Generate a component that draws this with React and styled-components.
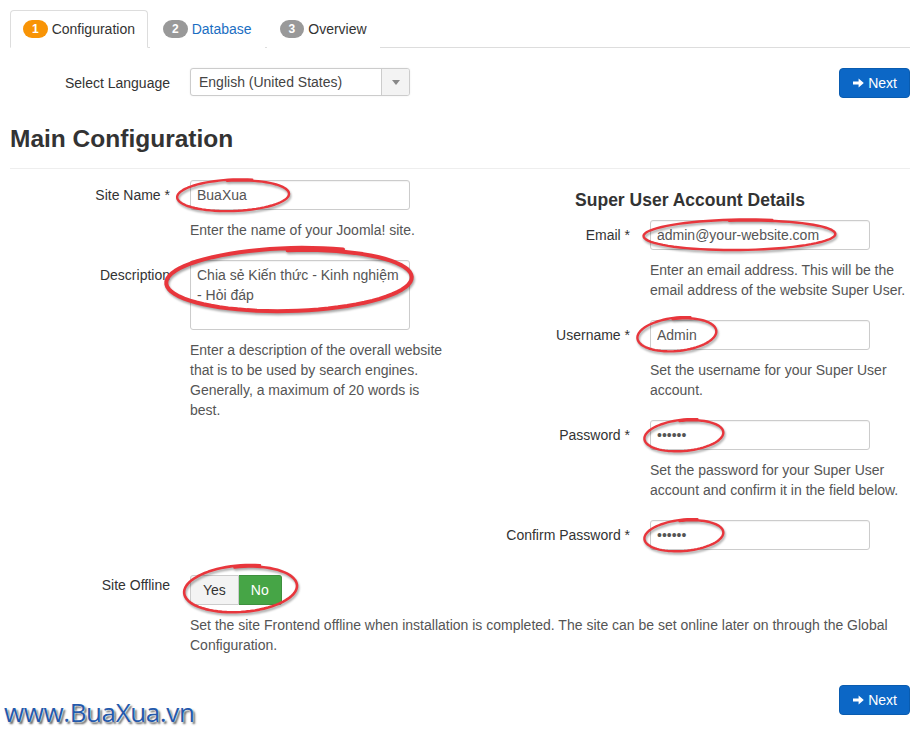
import React from "react";
import styled, { createGlobalStyle } from "styled-components";

const GlobalStyle = createGlobalStyle`
  html, body { margin: 0; padding: 0; background: #fff; }
  body {
    font-family: "Liberation Sans", Arial, sans-serif;
    font-size: 14px;
    line-height: 20px;
    color: #333;
  }
  * { box-sizing: border-box; }
`;

const Page = styled.div`
  position: relative;
  width: 923px;
  min-height: 729px;
  padding: 10px 13px 0 10px;
  overflow: hidden;
`;

const Tabs = styled.ul`
  display: flex;
  list-style: none;
  margin: 0;
  padding: 0;
  border-bottom: 1px solid #ddd;
`;

const Tab = styled.li`
  display: flex;
  align-items: center;
  gap: 4px;
  margin: 0 2px -1px 0;
  padding: 8px 12px;
  line-height: 20px;
  border: 1px solid ${(p) => (p.$active ? "#ddd" : "transparent")};
  border-bottom-color: ${(p) => (p.$active ? "#fff" : "transparent")};
  border-radius: 4px 4px 0 0;
  background: #fff;
`;

const Badge = styled.span`
  display: inline-block;
  min-width: 24px;
  padding: 2px 9px;
  font-size: 12px;
  font-weight: bold;
  line-height: 14px;
  color: #fff;
  text-align: center;
  border-radius: 9px;
  background: ${(p) => p.$color};
`;

const TabText = styled.span`
  color: ${(p) => (p.$link ? "#1b6ec2" : "#333")};
`;

const TopRow = styled.div`
  display: flex;
  align-items: flex-start;
  justify-content: space-between;
  margin-top: 20px;
`;

const FieldRow = styled.div`
  display: flex;
  align-items: flex-start;
  margin-bottom: ${(p) => (p.$mb != null ? p.$mb : 20)}px;
  margin-top: ${(p) => p.$mt || 0}px;
`;

const Label = styled.label`
  flex: 0 0 160px;
  width: 160px;
  text-align: right;
  padding-top: ${(p) => (p.$pt != null ? p.$pt : 5)}px;
  line-height: 20px;
  color: #333;
`;

const Controls = styled.div`
  position: relative;
  margin-left: 20px;
  flex: 1;
`;

const Input = styled.input`
  display: block;
  width: 220px;
  height: 30px;
  padding: 4px 6px;
  margin: 0;
  font-family: "Liberation Sans", Arial, sans-serif;
  font-size: 14px;
  line-height: 20px;
  color: #555;
  background: #fff;
  border: 1px solid #ccc;
  border-radius: 3px;
  box-shadow: inset 0 1px 1px rgba(0, 0, 0, 0.05);
  outline: none;
`;

const TextArea = styled.textarea`
  display: block;
  width: 220px;
  height: 70px;
  padding: 4px 6px;
  margin: 0;
  resize: none;
  font-family: "Liberation Sans", Arial, sans-serif;
  font-size: 14px;
  line-height: 20px;
  color: #555;
  background: #fff;
  border: 1px solid #ccc;
  border-radius: 3px;
  box-shadow: inset 0 1px 1px rgba(0, 0, 0, 0.05);
  outline: none;
  overflow: hidden;
`;

const Select = styled.div`
  display: flex;
  width: 220px;
  height: 28px;
  border: 1px solid #ccc;
  border-radius: 3px;
  background: #fff;
  box-shadow: 0 0 2px rgba(0, 0, 0, 0.08);
  overflow: hidden;
`;

const SelectValue = styled.div`
  flex: 1;
  padding: 3px 8px;
  line-height: 20px;
  color: #444;
`;

const SelectArrow = styled.div`
  flex: 0 0 28px;
  display: flex;
  align-items: center;
  justify-content: center;
  border-left: 1px solid #ccc;
  background: #f3f3f3;
  &::after {
    content: "";
    border-left: 4px solid transparent;
    border-right: 4px solid transparent;
    border-top: 5px solid #888;
  }
`;

const PrimaryButton = styled.button`
  display: inline-flex;
  align-items: center;
  gap: 4px;
  height: 30px;
  padding: 4px 12px 4px 13px;
  font-family: "Liberation Sans", Arial, sans-serif;
  font-size: 14px;
  line-height: 20px;
  color: #fff;
  background: #0c67c6;
  border: 1px solid #0a5cb0;
  border-radius: 4px;
  cursor: pointer;
`;

const PageHeader = styled.h3`
  margin: 21px 0 11px;
  padding-bottom: 9px;
  border-bottom: 1px solid #eee;
  font-size: 24.5px;
  font-weight: bold;
  line-height: 40px;
  color: #333;
`;

const Columns = styled.div`
  display: grid;
  grid-template-columns: 438px 1fr;
  column-gap: 22px;
`;

const Column = styled.div``;

const SubHeading = styled.h4`
  margin: 10px 0;
  font-size: 17.5px;
  font-weight: bold;
  line-height: 20px;
  text-align: center;
  color: #333;
`;

const Help = styled.div`
  margin-top: 10px;
  color: #555;
  line-height: 20px;
`;

const ToggleGroup = styled.div`
  display: inline-flex;
`;

const ToggleBtn = styled.span`
  display: inline-block;
  height: 30px;
  padding: 4px 12px;
  line-height: 20px;
  font-size: 14px;
  color: ${(p) => (p.$on ? "#fff" : "#333")};
  background: ${(p) => (p.$on ? "#46a546" : "#f3f3f3")};
  border: 1px solid ${(p) => (p.$on ? "#3e8f3e" : "#ccc")};
  &:first-child { border-radius: 3px 0 0 3px; }
  &:last-child { border-radius: 0 3px 3px 0; border-left: 0; }
`;

const Footer = styled.div`
  display: flex;
  justify-content: flex-end;
  margin-top: 30px;
`;

const Watermark = styled.div`
  position: absolute;
  left: 4px;
  bottom: 0px;
  font-family: "Open Sans", "Noto Sans", sans-serif;
  font-size: 26px;
  line-height: 34px;
  color: #2459ab;
  letter-spacing: -0.4px;
  text-shadow: 0 0 1px #fff, 0 0 2px #fff, 2px 2px 2px rgba(50, 50, 50, 0.8);
`;

const Mark = styled.svg.attrs((p) => ({
  width: p.$w,
  height: p.$h,
  viewBox: `0 0 ${p.$w} ${p.$h}`,
}))`
  position: absolute;
  left: ${(p) => p.$x}px;
  top: ${(p) => p.$y}px;
  overflow: visible;
  pointer-events: none;
  z-index: 2;
  filter: drop-shadow(1px 2px 1.2px rgba(0, 0, 0, 0.35));
`;

function loopPath(w, h, tilt = -0.03, start = -1.7, extra = 0.45, grow = 0.07) {
  const cx = w / 2;
  const cy = h / 2;
  const rx = w / 2;
  const ry = h / 2;
  const N = 80;
  let d = "";
  for (let i = 0; i <= N; i++) {
    const t = start + ((Math.PI * 2 + extra) * i) / N;
    const s = 1 - grow / 2 + (grow * i) / N;
    const x0 = rx * s * Math.cos(t);
    const y0 = ry * s * Math.sin(t);
    const x = cx + x0;
    const y = cy + y0 + x0 * tilt * (h / w);
    d += (i === 0 ? "M" : "L") + x.toFixed(2) + " " + y.toFixed(2);
  }
  return d;
}

function Ring({ x, y, w, h, sw = 2.4, tilt = -0.15, start, extra, grow }) {
  return (
    <Mark $x={x} $y={y} $w={w} $h={h}>
      <path
        d={loopPath(w, h, tilt, start, extra, grow)}
        fill="none"
        stroke="#e8363c"
        strokeWidth={sw}
        strokeLinecap="round"
        strokeLinejoin="round"
      />
    </Mark>
  );
}

function ArrowIcon() {
  return (
    <svg width="11" height="10" viewBox="0 0 11 10">
      <path d="M0 3.6h5.6V0.6L10.8 5 5.6 9.4V6.4H0z" fill="#fff" />
    </svg>
  );
}

export default function App() {
  return (
    <>
      <GlobalStyle />
      <Page>
        <Tabs>
          <Tab $active>
            <Badge $color="#f89406">1</Badge>
            <TabText>Configuration</TabText>
          </Tab>
          <Tab>
            <Badge $color="#999">2</Badge>
            <TabText $link>Database</TabText>
          </Tab>
          <Tab>
            <Badge $color="#999">3</Badge>
            <TabText>Overview</TabText>
          </Tab>
        </Tabs>

        <TopRow>
          <FieldRow $mb={0}>
            <Label>Select Language</Label>
            <Controls>
              <Select>
                <SelectValue>English (United States)</SelectValue>
                <SelectArrow />
              </Select>
            </Controls>
          </FieldRow>
          <PrimaryButton>
            <ArrowIcon />
            Next
          </PrimaryButton>
        </TopRow>

        <PageHeader>Main Configuration</PageHeader>

        <Columns>
          <Column>
            <FieldRow>
              <Label>Site Name *</Label>
              <Controls>
                <Input readOnly value="BuaXua" />
                <Ring x={-12} y={0} w={112} h={31} tilt={-0.12} />
                <Help>Enter the name of your Joomla! site.</Help>
              </Controls>
            </FieldRow>
            <FieldRow>
              <Label>Description</Label>
              <Controls>
                <TextArea readOnly value={"Chia sẻ Kiến thức - Kinh nghiệm - Hỏi đáp"} />
                <Ring x={-22} y={-11} w={246} h={62} sw={4} tilt={-0.1} start={-1.6} />
                <Help>
                  Enter a description of the overall website that is to be used by search
                  engines. Generally, a maximum of 20 words is best.
                </Help>
              </Controls>
            </FieldRow>
          </Column>

          <Column>
            <SubHeading>Super User Account Details</SubHeading>
            <FieldRow>
              <Label>Email *</Label>
              <Controls>
                <Input readOnly value="admin@your-website.com" />
                <Ring x={-5} y={0} w={192} h={30} tilt={-0.08} />
                <Help>
                  Enter an email address. This will be the email address of the website
                  Super User.
                </Help>
              </Controls>
            </FieldRow>
            <FieldRow>
              <Label>Username *</Label>
              <Controls>
                <Input readOnly value="Admin" />
                <Ring x={-12} y={-2} w={79} h={33} tilt={-0.2} />
                <Help>Set the username for your Super User account.</Help>
              </Controls>
            </FieldRow>
            <FieldRow>
              <Label>Password *</Label>
              <Controls>
                <Input readOnly type="password" value="abcdef" />
                <Ring x={-5} y={0} w={79} h={31} tilt={-0.2} />
                <Help>
                  Set the password for your Super User account and confirm it in the field
                  below.
                </Help>
              </Controls>
            </FieldRow>
            <FieldRow>
              <Label>Confirm Password *</Label>
              <Controls>
                <Input readOnly type="password" value="abcdef" />
                <Ring x={-5} y={0} w={79} h={31} tilt={-0.2} />
              </Controls>
            </FieldRow>
          </Column>
        </Columns>

        <FieldRow $mt={5} $mb={0}>
          <Label $pt={0}>Site Offline</Label>
          <Controls>
            <ToggleGroup>
              <ToggleBtn>Yes</ToggleBtn>
              <ToggleBtn $on>No</ToggleBtn>
            </ToggleGroup>
            <Ring x={-5} y={-9} w={113} h={46} sw={2.6} tilt={-0.15} />
            <Help>
              Set the site Frontend offline when installation is completed. The site can be
              set online later on through the Global Configuration.
            </Help>
          </Controls>
        </FieldRow>

        <Footer>
          <PrimaryButton>
            <ArrowIcon />
            Next
          </PrimaryButton>
        </Footer>

        <Watermark>www.BuaXua.vn</Watermark>
      </Page>
    </>
  );
}
